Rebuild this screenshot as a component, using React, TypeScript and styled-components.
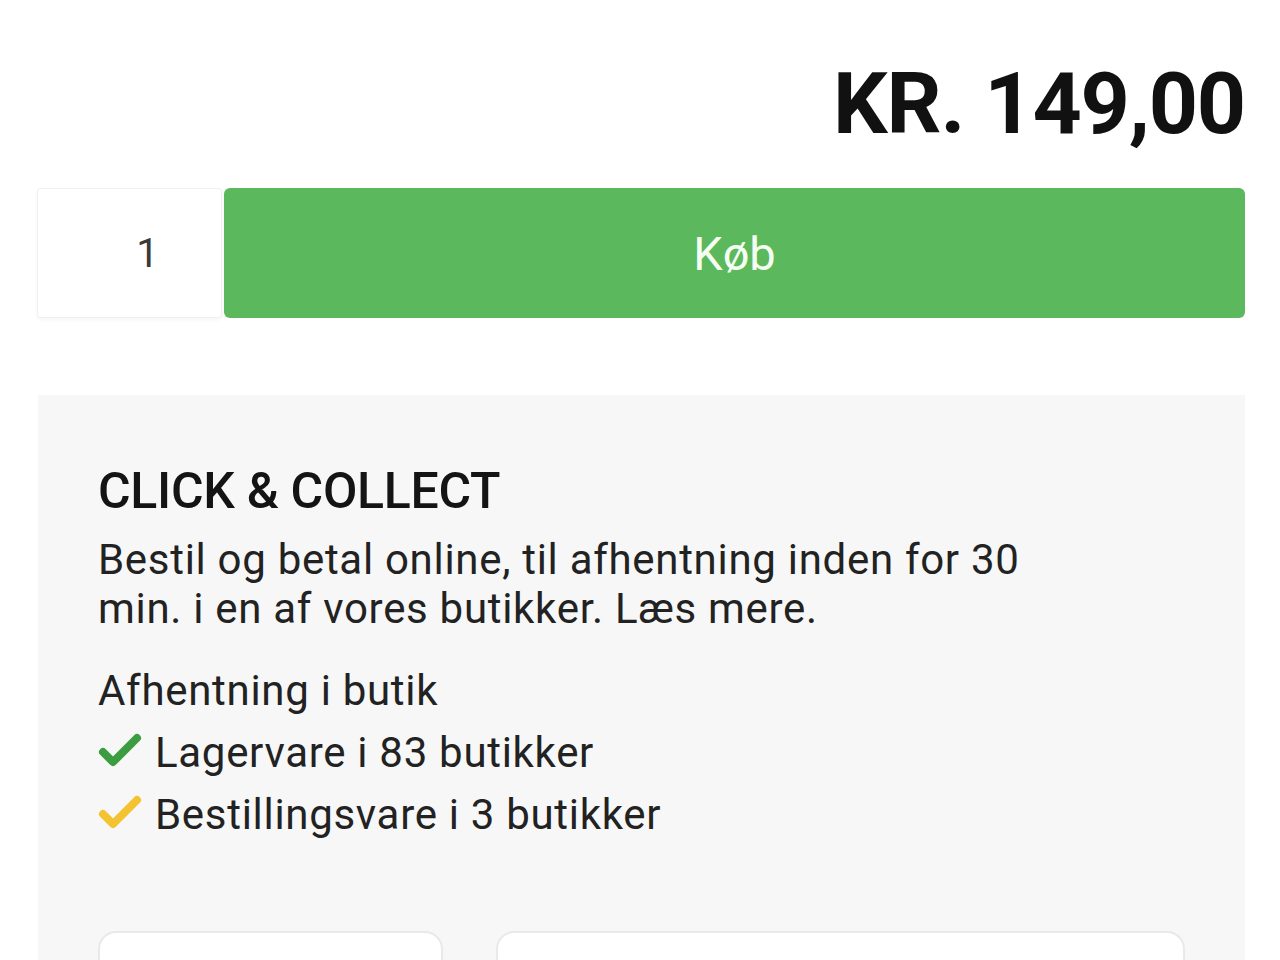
import styled, { createGlobalStyle } from "styled-components";

const GlobalStyle = createGlobalStyle`
  * {
    box-sizing: border-box;
  }
  body {
    margin: 0;
    background: #ffffff;
    font-family: Roboto, "Noto Sans", Arial, sans-serif;
    color: #1c1c1c;
  }
`;

const Page = styled.div`
  padding: 61px 35px 0 38px;
  width: 1280px;
  overflow: hidden;
`;

const Price = styled.div`
  text-align: right;
  font-size: 86px;
  line-height: 1;
  font-weight: 700;
  letter-spacing: -1.2px;
  color: #111;
`;

const BuyRow = styled.div`
  display: flex;
  gap: 2px;
  margin-top: 41px;
  height: 130px;
`;

const Quantity = styled.input`
  width: 185px;
  margin-left: -1px;
  height: 100%;
  border: 1px solid #f0f0f0;
  border-radius: 3px;
  box-shadow: 0 2px 4px rgba(0, 0, 0, 0.04);
  background: #fff;
  font-family: Roboto, Arial, sans-serif;
  font-size: 40px;
  color: #3a3a3a;
  text-align: center;
  padding: 0 0 0 36px;
  outline: none;
`;

const BuyButton = styled.button`
  flex: 1;
  height: 100%;
  border: none;
  border-radius: 6px;
  background: #5cb85c;
  color: #f4fff2;
  font-family: Roboto, Arial, sans-serif;
  font-size: 47px;
  font-weight: 400;
  cursor: pointer;
`;

const Panel = styled.section`
  margin-top: 77px;
  background: #f7f7f7;
  padding: 66px 60px 0 60px;
  height: 640px;
`;

const Title = styled.h2`
  margin: 0;
  font-size: 50px;
  line-height: 60px;
  font-weight: 500;
  letter-spacing: -0.3px;
  color: #141414;
`;

const Intro = styled.p`
  margin: 14px 0 0;
  max-width: 960px;
  font-size: 42px;
  line-height: 49px;
  letter-spacing: 0.7px;
  color: #222;
`;

const StockList = styled.div`
  margin-top: 26px;
  display: flex;
  flex-direction: column;
`;

const StockRow = styled.div`
  display: flex;
  align-items: center;
  gap: 13px;
  height: 62px;
  font-size: 42px;
  letter-spacing: 0.7px;
  color: #222;
`;

const Stores = styled.div`
  margin-top: 86px;
  display: grid;
  grid-template-columns: 1fr 2fr;
  gap: 53px;
`;

const StoreCard = styled.div`
  height: 120px;
  background: #fff;
  border: 2px solid #e9e9e9;
  border-radius: 18px;
`;

const Check = ({ color }: { color: string }) => (
  <svg width="44" height="34" viewBox="0 0 44 34" style={{ marginTop: -4 }}>
    <polyline
      points="5,19 15,29 39,5"
      fill="none"
      stroke={color}
      strokeWidth="8"
      strokeLinecap="round"
      strokeLinejoin="round"
    />
  </svg>
);

const App = () => {
  return (
    <Page>
      <GlobalStyle />
      <Price>KR. 149,00</Price>
      <BuyRow>
        <Quantity readOnly value="1" />
        <BuyButton>Køb</BuyButton>
      </BuyRow>
      <Panel>
        <Title>CLICK &amp; COLLECT</Title>
        <Intro>
          Bestil og betal online, til afhentning inden for 30 min. i en af
          vores butikker. Læs mere.
        </Intro>
        <StockList>
          <StockRow>Afhentning i butik</StockRow>
          <StockRow>
            <Check color="#3c9d40" />
            Lagervare i 83 butikker
          </StockRow>
          <StockRow>
            <Check color="#f3c332" />
            Bestillingsvare i 3 butikker
          </StockRow>
        </StockList>
        <Stores>
          <StoreCard />
          <StoreCard />
        </Stores>
      </Panel>
    </Page>
  );
};

export default App;
